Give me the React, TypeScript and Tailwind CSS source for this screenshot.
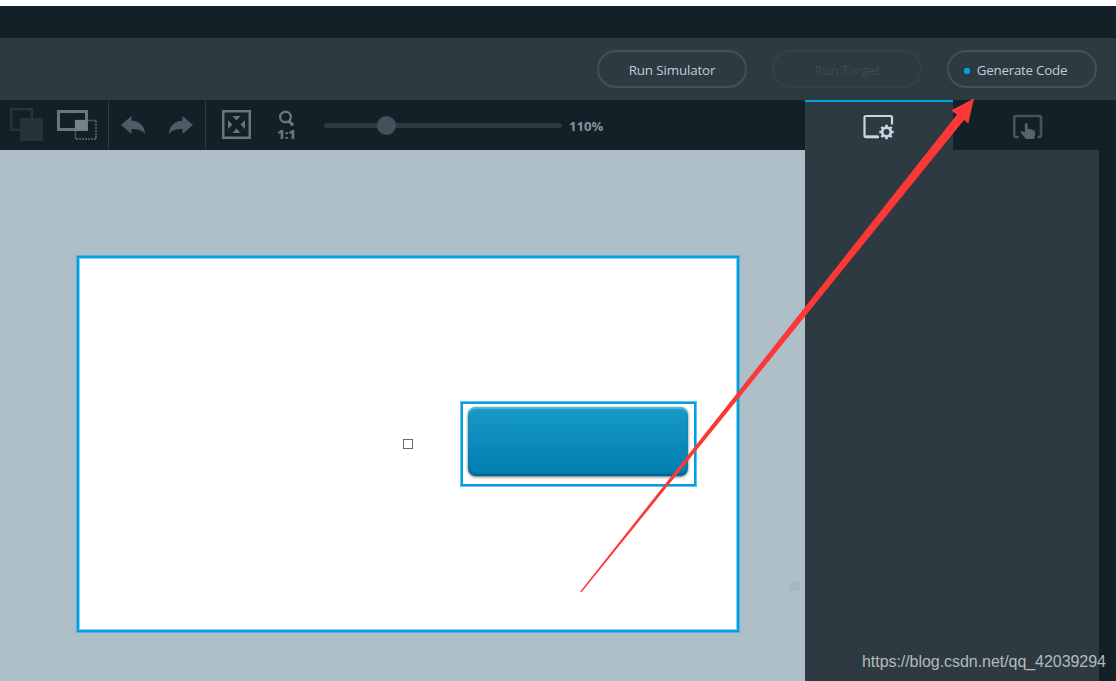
import clsx from "clsx";

const ACTION_BUTTON = "flex h-[38px] w-[150px] items-center justify-center rounded-full border-2 pt-[3px] text-[13.4px] leading-none";

function BringForwardIcon() {
    return (
        <svg width="34" height="34" viewBox="0 0 34 34" fill="none">
            <rect x="1.25" y="1.25" width="20.5" height="20.5" stroke="#24343b" strokeWidth="2.5" />
            <rect x="10" y="10" width="23" height="23" fill="#24343b" />
        </svg>
    );
}

function OverlapIcon() {
    return (
        <svg width="40" height="31" viewBox="0 0 40 31" fill="none">
            <rect x="18.5" y="10.5" width="20.5" height="18.5" stroke="#5c6d74" strokeWidth="1.5" strokeDasharray="2 1" />
            <rect x="1.5" y="1.5" width="28" height="18" stroke="#66777e" strokeWidth="3" />
            <rect x="18" y="10" width="12.5" height="10.5" fill="#72838a" />
        </svg>
    );
}

function UndoIcon({ flipped = false }: { flipped?: boolean }) {
    return (
        <svg width="24" height="19" viewBox="0 0 24 19" className={clsx(flipped && "-scale-x-100")}>
            <path d="M0 9 10.5 0v4.7C18.5 4.9 24 10.5 24 18c-2.500-4-8-5-13.500-5v5z" fill="#4c5d65" />
        </svg>
    );
}

function FitScreenIcon() {
    return (
        <svg width="29" height="29" viewBox="0 0 29 29">
            <rect x="1.25" y="1.25" width="26.5" height="26.5" fill="none" stroke="#66777e" strokeWidth="2.5" />
            <path d="M10.500 6h8l-4 4.500zM10.500 23h8l-4-4.500zM6 10v9l4.500-4.500zM23 10v9l-4.500-4.500z" fill="#66777e" />
        </svg>
    );
}

function ActualSizeIcon() {
    return (
        <svg width="20" height="34" viewBox="0 0 20 34">
            <circle cx="8.5" cy="7" r="5.300" fill="none" stroke="#66777e" strokeWidth="2.400" />
            <path d="M12 11l4 4.300" stroke="#66777e" strokeWidth="3.200" />
            <text x="9.5" y="28.500" textAnchor="middle" fill="#66777e" fontSize="12.800" fontWeight="800" fontFamily="Open Sans, sans-serif">
                1:1
            </text>
        </svg>
    );
}

function PropertiesIcon() {
    return (
        <svg width="32" height="27" viewBox="0 0 32 27" fill="none">
            <path d="M16 23H3Q1.500 23 1.500 21.500V3.500Q1.500 2 3 2H27.500Q29 2 29 3.500V10.500" stroke="#c5d7df" strokeWidth="2.200" />
            <path d="M2.500 22.800H15.500" stroke="#c5d7df" strokeWidth="3" />
            <circle cx="23.5" cy="18" r="4.300" stroke="#c5d7df" strokeWidth="2.700" />
            <path
                d="M23.500 10.800v2.700M23.500 22.500v2.700M16.300 18h2.700M28 18h2.700M18.400 12.900l1.900 1.900M26.700 21.200l1.900 1.900M18.400 23.100l1.900-1.900M26.700 14.800l1.900-1.900"
                stroke="#c5d7df"
                strokeWidth="2.600"
            />
        </svg>
    );
}

function InteractionsIcon() {
    return (
        <svg width="30" height="26" viewBox="0 0 30 26" fill="none">
            <path d="M6 23H3Q1.200 23 1.200 21.500V3.500Q1.200 2 3 2H26.500Q28 2 28 3.500V21.500Q28 23 26.500 23H24.500" stroke="#45555d" strokeWidth="2.600" />
            <path
                d="M11.900 10.500q0-1.500 1.300-1.500t1.400 1.500v4.500q2-.7 2.800.5 1.700-.6 2.500.7 2.200-.3 2.200 2v2.300q0 2-1.200 4.500h-8.300q-1.200-2.500-3.500-4.500-1.600-1.600-1.700-3 1.500-.9 4.500 1z"
                fill="#53646b"
            />
        </svg>
    );
}

function Header() {
    return (
        <header className="flex h-[62px] items-start justify-end gap-[25px] bg-[#2d3a41] pt-3 pr-[19px]">
            <button className={clsx(ACTION_BUTTON, "border-[#425159] text-[#bdcfd7]")}>
                <span className="tracking-[-0.15px]">Run Simulator</span>
            </button>
            <button className={clsx(ACTION_BUTTON, "border-[#344148] text-[#3d4b52]")}>
                <span className="tracking-[-0.25px]">Run Target</span>
            </button>
            <button className={clsx(ACTION_BUTTON, "gap-[7px] border-[#425159] text-[#bdcfd7]")}>
                <span className="-ml-[13px] size-1.5 rounded-[2px] bg-[#039fdf]" />
                <span className="tracking-[-0.25px]">Generate Code</span>
            </button>
        </header>
    );
}

function Toolbar() {
    return (
        <div className="flex h-[50px] shrink-0 bg-[#112127]">
            <div className="flex w-[109px] items-start gap-[13px] border-r border-[#2d3a41] pt-2 pl-2.5">
                <BringForwardIcon />
                <div className="pt-0.5">
                    <OverlapIcon />
                </div>
            </div>
            <div className="flex w-[97px] items-start gap-6 border-r border-[#2d3a41] pt-4 pl-3">
                <UndoIcon />
                <UndoIcon flipped />
            </div>
            <div className="flex items-start pt-2.5 pl-4">
                <FitScreenIcon />
                <div className="ml-[26px]">
                    <ActualSizeIcon />
                </div>
            </div>
            <div className="ml-[27px] flex h-[51px] items-center">
                <div className="flex h-[5px] w-[238px] items-center rounded-full bg-[#2d3a41] pl-[53px]">
                    <span className="size-[19px] rounded-full bg-[#43525a]" />
                </div>
                <span className="mt-0.5 ml-[7px] text-[13.2px] leading-none font-bold text-[#82949c]">110%</span>
            </div>
        </div>
    );
}

function Canvas() {
    return (
        <div className="relative flex-1 bg-[#aebfc7]">
            <div className="absolute top-[105px] left-[76px] h-[378px] w-[664px] border border-[#55b1d8] bg-[#039fdf]">
                <div className="absolute inset-0.5 border border-[#8dd2ef] bg-white" />
            </div>
            <div className="absolute top-[289px] left-[403px] size-2.5 border border-[#686868] bg-white" />
            <div className="absolute top-[251px] left-[460px] h-[86px] w-[237px] border border-[#60c3eb] bg-[#039fdf] p-0.5">
                <div className="h-full bg-white pt-[3px] pl-[5px]">
                    <div className="h-[69px] w-[220px] rounded-[8px] bg-linear-to-b from-[#179bc9] to-[#007dae] shadow-[0_1px_3px_rgba(0,0,0,0.6),inset_0_2px_1px_#58b5d5,inset_0_-2px_2px_#00648a]" />
                </div>
            </div>
            <div className="absolute top-[431px] left-[790px] size-2.5 rounded-t-full bg-[#a5b6be]" />
        </div>
    );
}

function SidePanel() {
    return (
        <aside className="flex w-[311px] flex-col bg-[#112127] pr-[17px]">
            <div className="flex h-[50px]">
                <div className="w-[148px] border-t-2 border-[#039fdf] bg-[#2d3a41] pt-3 pl-[58px]">
                    <PropertiesIcon />
                </div>
                <div className="flex-1 pt-3.5 pl-[60px]">
                    <InteractionsIcon />
                </div>
            </div>
            <div className="flex-1 bg-[#2d3a41]" />
        </aside>
    );
}

export default function App() {
    return (
        <div className="relative flex h-[681px] w-[1116px] flex-col overflow-hidden bg-white pt-1.5 font-['Open_Sans',sans-serif]">
            <div className="h-8 shrink-0 bg-[#112127]" />
            <Header />
            <main className="flex flex-1">
                <div className="flex w-[805px] flex-col">
                    <Toolbar />
                    <Canvas />
                </div>
                <SidePanel />
            </main>

            {/* Pointer to the Generate Code button */}
            <svg className="pointer-events-none absolute inset-0" width="1116" height="681" viewBox="0 0 1116 681">
                <path d="M974 98.500 951.300 110.300 956.800 114.800 580.300 591.500 581.300 592.500 964 120 968.300 123.500z" fill="#fc3837" />
            </svg>
            <span className="absolute top-[652px] left-[862px] font-['Liberation_Sans',sans-serif] text-[16px] leading-5 tracking-[-0.05px] whitespace-nowrap text-[#b4babd]">
                https://blog.csdn.net/qq_42039294
            </span>
        </div>
    );
}
